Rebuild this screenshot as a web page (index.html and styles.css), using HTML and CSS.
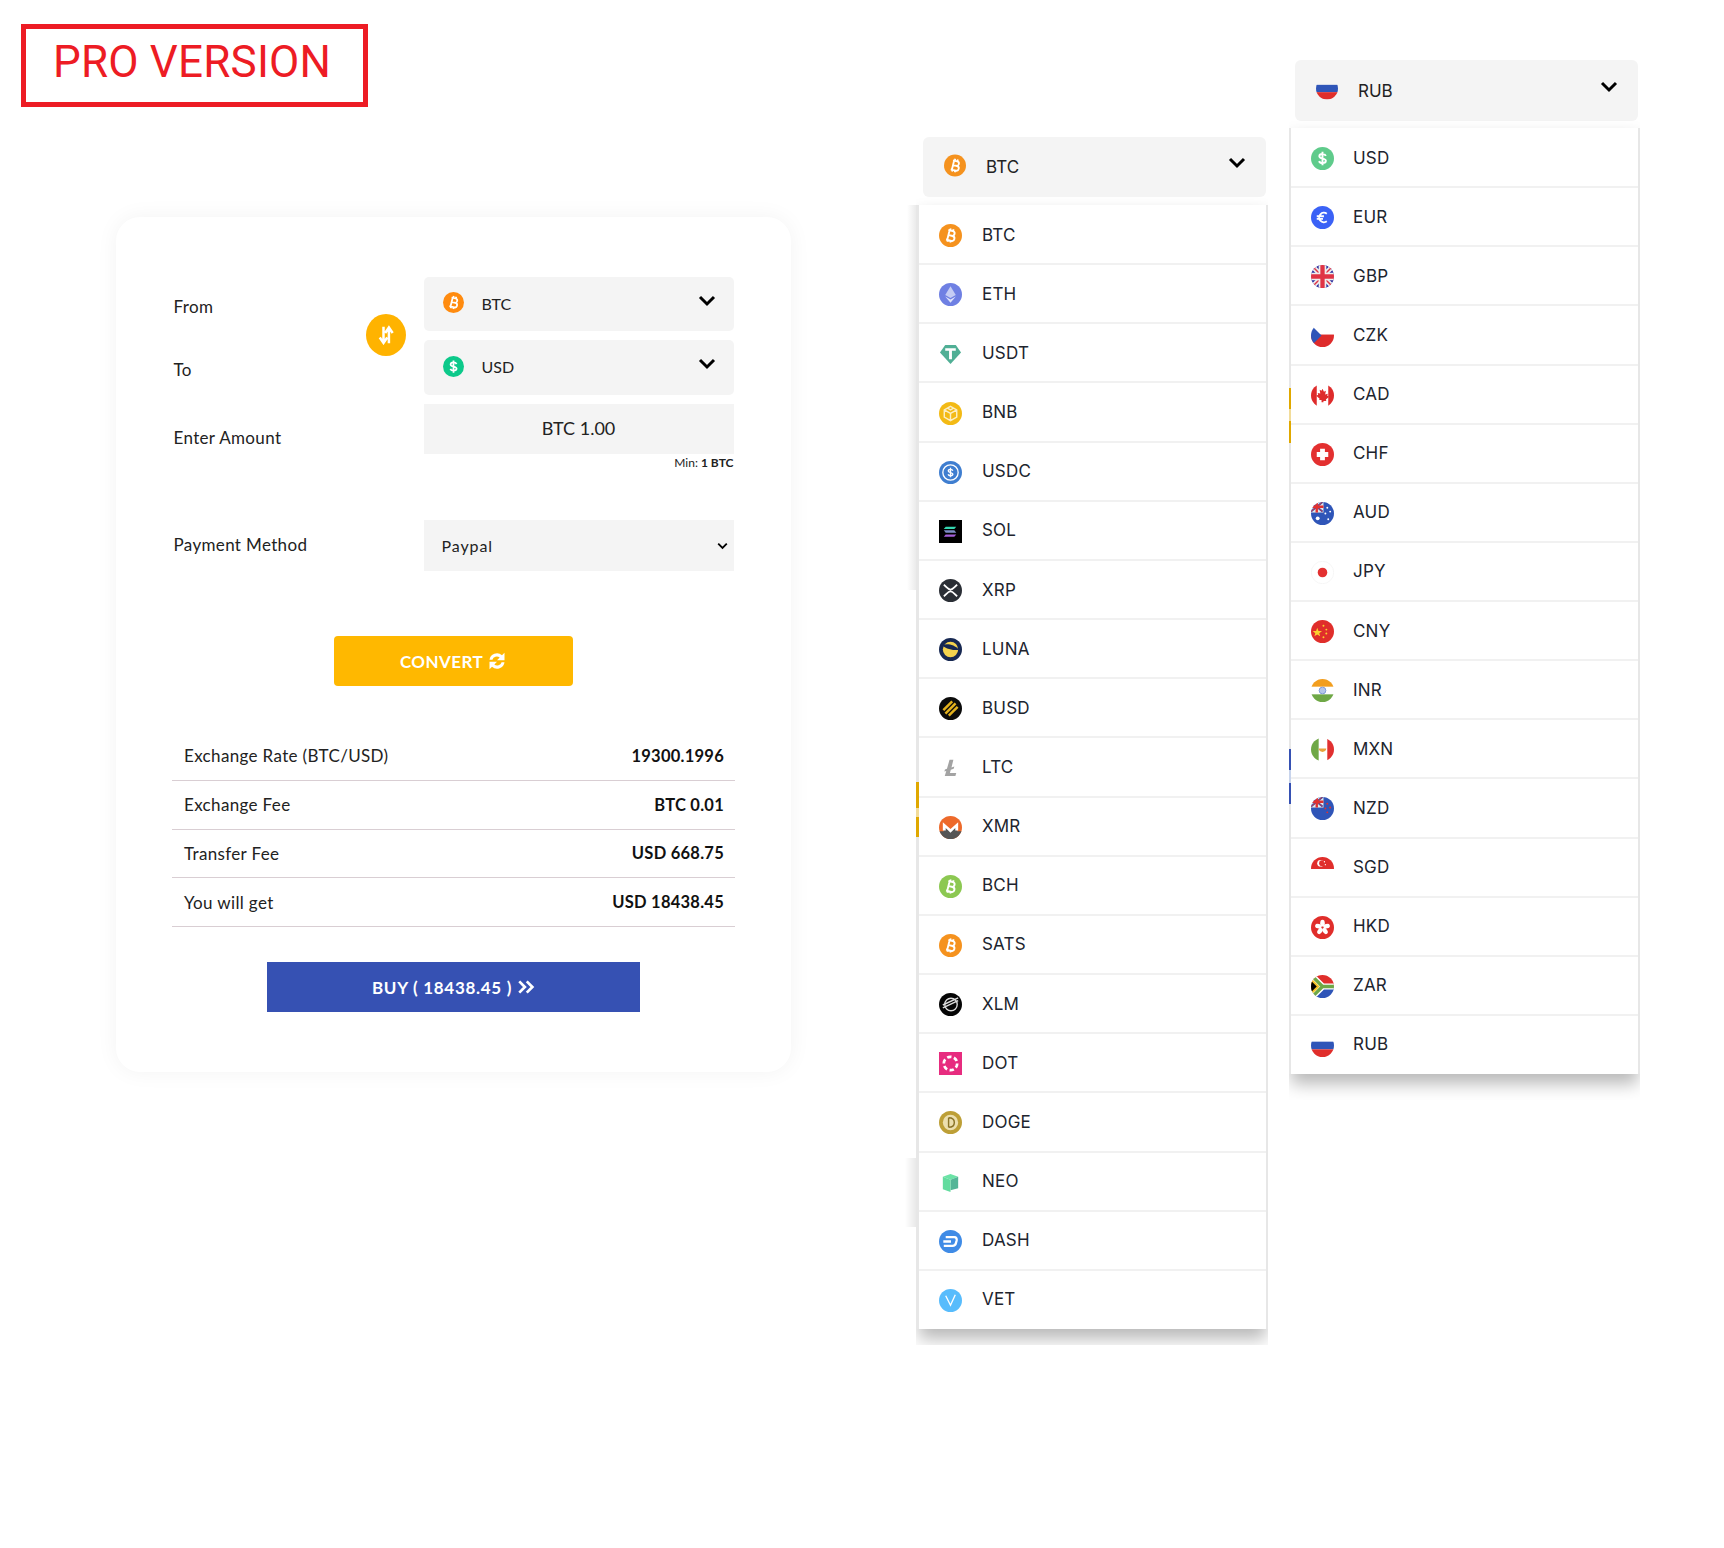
FILE: index.html
```html
<!DOCTYPE html>
<html lang="en">
<head>
<meta charset="utf-8">
<title>Pro Version</title>
<link rel="stylesheet" href="styles.css">
</head>
<body>
<svg class="defs" aria-hidden="true">
<defs>
<clipPath id="c"><circle cx="12" cy="12" r="12"/></clipPath>
<g id="bm" fill="none" stroke="#fff" stroke-width="2" transform="rotate(14 12 12)"><path d="M8.5 7h4.7a2.5 2.5 0 0 1 0 5H9.5m0 0h4.7a2.6 2.6 0 0 1 0 5.2H8.5M9.8 7v10M10.5 4.8V7M13.5 4.8V7M10.5 17v2.2M13.5 17v2.2"/></g>
<path id="dm" fill="none" stroke="#fff" stroke-width="2" d="M15.5 9.3c-.5-1.300-1.800-2-3.500-2-1.900 0-3.300 1-3.300 2.400 0 3.100 6.800 1.700 6.800 4.700 0 1.400-1.400 2.400-3.500 2.400-1.800 0-3.100-.8-3.600-2.100M12 5v14"/>
<g id="uk"><rect width="13" height="11" fill="#e8e8e8"/><path d="M0 0l12 10M12 0L0 10" stroke="#2f55b8" stroke-width="2"/><path d="M0 0l12 10M12 0L0 10" stroke="#e03030" stroke-width="1"/><path d="M6 0v11M0 5h13" stroke="#e03030" stroke-width="2.5"/></g>
<symbol id="btc" viewBox="0 0 24 24"><circle cx="12" cy="12" r="12" fill="#f5921e"/><use href="#bm"/></symbol>
<symbol id="btc2" viewBox="0 0 24 24"><circle cx="12" cy="12" r="12" fill="#ff8b0f"/><use href="#bm"/></symbol>
<symbol id="eth" viewBox="0 0 24 24"><circle cx="12" cy="12" r="12" fill="#6f80e3"/><path d="M12 3.5l-5.500 9L12 15.700l5.500-3.200z" fill="#c5cdf4"/><path d="M6.500 14L12 20.500l5.500-6.500-5.500 3.200z" fill="#dfe3fa"/></symbol>
<symbol id="usdt" viewBox="0 0 24 24"><path d="M6.500 3h11L23 11 12 23 1 11z" fill="#50af95"/><path d="M6.500 6.500h11v2.500h-4v9h-3V9h-4z" fill="#fff"/></symbol>
<symbol id="bnb" viewBox="0 0 24 24"><circle cx="12" cy="12" r="12" fill="#f3ba15"/><path d="M12 4.500l6.500 3.700v7.600L12 19.500l-6.500-3.700V8.200zM5.500 8.200l6.500 3.700 6.500-3.700M12 11.900v7.600M8.800 6.400l3.200 1.800 3.200-1.800" fill="none" stroke="#fff" stroke-width="1.500" opacity=".75"/></symbol>
<symbol id="usdc" viewBox="0 0 24 24"><circle cx="12" cy="12" r="12" fill="#3f7ed0"/><circle cx="12" cy="12" r="8" fill="none" stroke="#fff" stroke-width="1.400"/><use href="#dm" transform="translate(3.600 3.600) scale(.7)"/></symbol>
<symbol id="sol" viewBox="0 0 24 24"><rect width="24" height="24" fill="#000"/><path d="M7 7h11l-2 2.500H5z" fill="#35d6b0"/><path d="M5 10.800h11l2 2.400H7z" fill="#7d8ec6"/><path d="M7 15h11l-2 2.500H5z" fill="#a45fd8"/></symbol>
<symbol id="xrp" viewBox="0 0 24 24"><circle cx="12" cy="12" r="12" fill="#2b2f36"/><path d="M5 6c3 2 4 5 7 5s4-3 7-5M5 18c3-2 4-5 7-5s4 3 7 5" fill="none" stroke="#fff" stroke-width="1.800"/></symbol>
<symbol id="luna" viewBox="0 0 24 24"><circle cx="12" cy="12" r="12" fill="#172852"/><circle cx="12" cy="12" r="8" fill="#f4d34e"/><path d="M3 7.500c5-2 13-1 18 5-5 .5-13-.5-18-5z" fill="#172852"/></symbol>
<symbol id="busd" viewBox="0 0 24 24"><circle cx="12" cy="12" r="12" fill="#0b0b0b"/><g transform="rotate(-45 12 12)" fill="#e3b11d"><rect x="5.500" y="6.700" width="13" height="2.600"/><rect x="4.500" y="10.700" width="15" height="2.600"/><rect x="5.500" y="14.700" width="13" height="2.600"/></g></symbol>
<symbol id="ltc" viewBox="0 0 24 24"><path d="M11 4h4l-2 8 3-1-.7 2.400-3 1-.9 3.300h6.600l-.9 3.300H6l1.600-5.400-2 .7.600-2.200 2.100-.8z" fill="#a3a3a3"/></symbol>
<symbol id="xmr" viewBox="0 0 24 24"><circle cx="12" cy="12" r="12" fill="#ed6a2b"/><path clip-path="url(#c)" d="M0 16h5V10l7 6 7-6v6h5v8H0z" fill="#555"/><path d="M4 15V6.500l8 7 8-7V15h-3v-2.500l-5 5-5-5V15z" fill="#fff"/></symbol>
<symbol id="bch" viewBox="0 0 24 24"><circle cx="12" cy="12" r="12" fill="#8cc852"/><use href="#bm"/></symbol>
<symbol id="xlm" viewBox="0 0 24 24"><circle cx="12" cy="12" r="12" fill="#050505"/><circle cx="12.500" cy="12" r="6.500" fill="none" stroke="#ddd" stroke-width="1.400"/><path d="M4 15.500L20 8M4 12.500L20 5" stroke="#ddd" stroke-width="1.500"/></symbol>
<symbol id="dot" viewBox="0 0 24 24"><rect width="24" height="24" fill="#e72c7f"/><circle cx="12" cy="12" r="7" fill="none" stroke="#fff" stroke-width="2.800" stroke-dasharray="4.600 2.700"/></symbol>
<symbol id="doge" viewBox="0 0 24 24"><circle cx="12" cy="12" r="12" fill="#bd9f36"/><circle cx="12" cy="12" r="8" fill="#ecdfae"/><path d="M10 7v10M10 7c5 0 6 2 6 5s-1 5-6 5" fill="none" stroke="#8a7326" stroke-width="1.500"/></symbol>
<symbol id="neo" viewBox="0 0 24 24"><path d="M4 6l8-3 8 3-8 3z" fill="#6be3a6"/><path d="M12 9l8-3v12l-8 2z" fill="#54b597"/><path d="M4 6l8 3v13l-8-3z" fill="#63dc9f"/></symbol>
<symbol id="dash" viewBox="0 0 24 24"><circle cx="12" cy="12" r="12" fill="#3f8be6"/><path d="M7 7.500h9c2 0 2.800 1.500 2.400 3.500l-.7 2.500c-.4 2-1.700 3-3.700 3H5M4.500 12h8" fill="none" stroke="#fff" stroke-width="2.400"/></symbol>
<symbol id="vet" viewBox="0 0 24 24"><circle cx="12" cy="12" r="12" fill="#58bcfc"/><path d="M7 7l5 10 5-11" fill="none" stroke="#fff" stroke-width="1.400"/></symbol>
<symbol id="usd" viewBox="0 0 24 24"><circle cx="12" cy="12" r="12" fill="#5fcb8b"/><use href="#dm"/></symbol>
<symbol id="usd2" viewBox="0 0 24 24"><circle cx="12" cy="12" r="12" fill="#0cc98a"/><use href="#dm"/></symbol>
<symbol id="eur" viewBox="0 0 24 24"><circle cx="12" cy="12" r="12" fill="#3b62f6"/><path d="M16.500 8a5 5 0 1 0 0 8M6 10.700h7.500M6 13.500h6.500" fill="none" stroke="#fff" stroke-width="1.900"/></symbol>
<symbol id="gbp" viewBox="0 0 24 24"><g clip-path="url(#c)"><rect width="24" height="24" fill="#2a2e9e"/><path d="M0 0l24 24M24 0L0 24" stroke="#eee" stroke-width="5"/><path d="M0 0l24 24M24 0L0 24" stroke="#e03445" stroke-width="1.500"/><path d="M12 0v24M0 12h24" stroke="#eee" stroke-width="8"/><path d="M12 0v24M0 12h24" stroke="#e03445" stroke-width="4.500"/></g></symbol>
<symbol id="czk" viewBox="0 0 24 24"><g clip-path="url(#c)"><rect y="11" width="24" height="13" fill="#de2b2b"/><path d="M0 0l11 11L0 22z" fill="#2f55b8" transform="translate(0 1)"/></g></symbol>
<symbol id="cad" viewBox="0 0 24 24"><g clip-path="url(#c)"><path d="M0 0h6v24H0zM18 0h6v24h-6z" fill="#de2b2b"/><path d="M12 5l1.500 3 2-1-.7 4 2.700-.7-.5 2 2 1-3.500 3 .5 1.500H13V19h-2v-2.200H8.500l.5-1.500-3.500-3 2-1-.5-2 2.700.7-.7-4 2 1z" fill="#de2b2b"/></g></symbol>
<symbol id="chf" viewBox="0 0 24 24"><circle cx="12" cy="12" r="12" fill="#e33030"/><path d="M9.500 6h5v3.500H18v5h-3.500V18h-5v-3.500H6v-5h3.500z" fill="#fff"/></symbol>
<symbol id="aud" viewBox="0 0 24 24"><g clip-path="url(#c)"><rect width="24" height="24" fill="#2f55b8"/><use href="#uk"/><circle cx="7" cy="17" r="2" fill="#fff"/><circle cx="17" cy="6" r="1" fill="#fff"/><circle cx="20" cy="10" r="1" fill="#fff"/><circle cx="15" cy="12" r="1" fill="#fff"/><circle cx="18" cy="18" r="1" fill="#fff"/></g></symbol>
<symbol id="jpy" viewBox="0 0 24 24"><circle cx="12" cy="12" r="11.700" fill="#fff" stroke="#f0f0f0" stroke-width=".6"/><circle cx="12" cy="12" r="5" fill="#e33030"/></symbol>
<symbol id="cny" viewBox="0 0 24 24"><circle cx="12" cy="12" r="12" fill="#e02e2b"/><path d="M6.500 8l1.300 3.500H11.500L8.600 13.700l1 3.300-3.100-2-3 2 1-3.300L1.700 11.500h3.600z" fill="#fbd12f"/><circle cx="13" cy="6" r="1" fill="#fbd12f"/><circle cx="16" cy="10" r="1" fill="#fbd12f"/><circle cx="16" cy="14" r="1" fill="#fbd12f"/><circle cx="13" cy="18" r="1" fill="#fbd12f"/></symbol>
<symbol id="inr" viewBox="0 0 24 24"><g clip-path="url(#c)"><rect y="0" width="24" height="8" fill="#f29e1f"/><rect y="16" width="24" height="8" fill="#6fa846"/></g><circle cx="12" cy="12" r="3.500" fill="#b5c6ea" stroke="#7f9ad8"/></symbol>
<symbol id="mxn" viewBox="0 0 24 24"><g clip-path="url(#c)"><rect width="8" height="24" fill="#6fa846"/><rect x="17" width="7" height="24" fill="#e13030"/><path d="M8 11h8c0 2-2 3.500-4 3.500S8 13 8 11z" fill="#e9a23b"/></g></symbol>
<symbol id="nzd" viewBox="0 0 24 24"><g clip-path="url(#c)"><rect width="24" height="24" fill="#2f55b8"/><use href="#uk"/><circle cx="17" cy="7" r="1" fill="#e03030"/><circle cx="20" cy="11" r="1" fill="#e03030"/><circle cx="15" cy="12" r="1" fill="#e03030"/><circle cx="17" cy="16" r="1" fill="#e03030"/></g></symbol>
<symbol id="sgd" viewBox="0 0 24 24"><g clip-path="url(#c)"><rect width="24" height="12.500" fill="#e02e2b"/><circle cx="10" cy="6.500" r="3.500" fill="#fff"/><circle cx="11.500" cy="6.500" r="3" fill="#e02e2b"/><circle cx="14" cy="5" r=".7" fill="#fff"/><circle cx="15" cy="8" r=".7" fill="#fff"/></g></symbol>
<symbol id="hkd" viewBox="0 0 24 24"><circle cx="12" cy="12" r="12" fill="#e02e2b"/><g fill="#fff"><ellipse cx="12" cy="7.500" rx="2.400" ry="3.500"/><ellipse cx="12" cy="7.500" rx="2.400" ry="3.500" transform="rotate(72 12 12)"/><ellipse cx="12" cy="7.500" rx="2.400" ry="3.500" transform="rotate(144 12 12)"/><ellipse cx="12" cy="7.500" rx="2.400" ry="3.500" transform="rotate(216 12 12)"/><ellipse cx="12" cy="7.500" rx="2.400" ry="3.500" transform="rotate(288 12 12)"/></g></symbol>
<symbol id="zar" viewBox="0 0 24 24"><g clip-path="url(#c)"><rect width="24" height="12" fill="#e02e2b"/><rect y="12" width="24" height="12" fill="#2f55b8"/><path d="M0 0l12 12h12M0 24l12-12" fill="none" stroke="#fff" stroke-width="6.500"/><path d="M0 0l12 12h12M0 24l12-12" fill="none" stroke="#6fa846" stroke-width="3.500"/><path d="M0 3l9 9-9 9z" fill="#f6c528"/><path d="M0 6l6 6-6 6z" fill="#000"/></g></symbol>
<symbol id="rub" viewBox="0 0 24 24"><g clip-path="url(#c)"><rect y="8" width="24" height="8" fill="#2f55b8"/><rect y="16" width="24" height="8" fill="#e02e2b"/></g></symbol>
<symbol id="chev" viewBox="0 0 18 12"><path d="M2 2l7 7 7-7" fill="none" stroke="#000" stroke-width="3"/></symbol>
</defs>
</svg>

<main class="page">
  <section class="col-left">
    <div class="badge">PRO VERSION</div>
    <div class="card">
      <div class="form">
        <span class="swap"><svg viewBox="0 0 24 24"><path d="M9 2v19M4.500 15l4.500 6.500 4.500-6.500M15.500 22V3M11 9.500L15.500 3 20 9.500" fill="none" stroke="#fff" stroke-width="3"/></svg></span>
        <label class="lbl lbl-sel">From</label>
        <div class="field sel"><svg class="sel-ico"><use href="#btc2"/></svg><span class="sel-txt">BTC</span><svg class="chev"><use href="#chev"/></svg></div>
        <label class="lbl lbl-sel">To</label>
        <div class="field sel sel-b"><svg class="sel-ico"><use href="#usd2"/></svg><span class="sel-txt">USD</span><svg class="chev"><use href="#chev"/></svg></div>
        <label class="lbl lbl-amt">Enter Amount</label>
        <div>
          <div class="field amount">BTC 1.00</div>
          <div class="min">Min: <b>1 BTC</b></div>
        </div>
        <label class="lbl lbl-pay">Payment Method</label>
        <div class="field pay"><span>Paypal</span><svg class="chev-s"><use href="#chev"/></svg></div>
      </div>
      <button class="btn convert">CONVERT<svg viewBox="0 0 24 24"><path d="M3 10.500a9 9 0 0 1 15-5.500l3-3v9h-9l3.200-3.200A5.500 5.500 0 0 0 6.500 10.500zM21 13.500a9 9 0 0 1-15 5.500l-3 3v-9h9l-3.200 3.200a5.500 5.500 0 0 0 8.700-2.700z" fill="#fff"/></svg></button>
      <div class="rows">
        <div class="row"><span>Exchange Rate (BTC/USD)</span><b>19300.1996</b></div>
        <div class="row"><span>Exchange Fee</span><b>BTC 0.01</b></div>
        <div class="row"><span>Transfer Fee</span><b>USD 668.75</b></div>
        <div class="row"><span>You will get</span><b>USD 18438.45</b></div>
      </div>
      <button class="btn buy">BUY ( 18438.45 )<svg viewBox="0 0 24 24"><path d="M3 4.500l7.500 7.500L3 19.500M13 4.500l7.500 7.500-7.500 7.500" fill="none" stroke="#fff" stroke-width="3.600"/></svg></button>
    </div>
  </section>

  <section class="col-mid">
    <div class="head"><svg class="head-ico"><use href="#btc"/></svg><span class="head-txt">BTC</span><svg class="chev"><use href="#chev"/></svg></div>
    <div class="panel panel-mid">
      <i class="glow glow-a"></i><i class="glow glow-b"></i>
      <i class="strip strip-y1"></i><i class="strip-gap strip-y1g"></i>
      <ul class="list list-mid">
        <li><svg><use href="#btc"/></svg>BTC</li>
        <li><svg><use href="#eth"/></svg>ETH</li>
        <li><svg><use href="#usdt"/></svg>USDT</li>
        <li><svg><use href="#bnb"/></svg>BNB</li>
        <li><svg><use href="#usdc"/></svg>USDC</li>
        <li><svg><use href="#sol"/></svg>SOL</li>
        <li><svg><use href="#xrp"/></svg>XRP</li>
        <li><svg><use href="#luna"/></svg>LUNA</li>
        <li><svg><use href="#busd"/></svg>BUSD</li>
        <li><svg><use href="#ltc"/></svg>LTC</li>
        <li><svg><use href="#xmr"/></svg>XMR</li>
        <li><svg><use href="#bch"/></svg>BCH</li>
        <li><svg><use href="#btc"/></svg>SATS</li>
        <li><svg><use href="#xlm"/></svg>XLM</li>
        <li><svg><use href="#dot"/></svg>DOT</li>
        <li><svg><use href="#doge"/></svg>DOGE</li>
        <li><svg><use href="#neo"/></svg>NEO</li>
        <li><svg><use href="#dash"/></svg>DASH</li>
        <li><svg><use href="#vet"/></svg>VET</li>
      </ul>
    </div>
  </section>

  <section class="col-right">
    <div class="head"><svg class="head-ico"><use href="#rub"/></svg><span class="head-txt">RUB</span><svg class="chev"><use href="#chev"/></svg></div>
    <div class="panel panel-right">
      <i class="strip strip-y2"></i><i class="strip-gap strip-y2g"></i>
      <i class="strip strip-b"></i><i class="strip-gap strip-bg"></i>
      <ul class="list list-right">
        <li><svg><use href="#usd"/></svg>USD</li>
        <li><svg><use href="#eur"/></svg>EUR</li>
        <li><svg><use href="#gbp"/></svg>GBP</li>
        <li><svg><use href="#czk"/></svg>CZK</li>
        <li><svg><use href="#cad"/></svg>CAD</li>
        <li><svg><use href="#chf"/></svg>CHF</li>
        <li><svg><use href="#aud"/></svg>AUD</li>
        <li><svg><use href="#jpy"/></svg>JPY</li>
        <li><svg><use href="#cny"/></svg>CNY</li>
        <li><svg><use href="#inr"/></svg>INR</li>
        <li><svg><use href="#mxn"/></svg>MXN</li>
        <li><svg><use href="#nzd"/></svg>NZD</li>
        <li><svg><use href="#sgd"/></svg>SGD</li>
        <li><svg><use href="#hkd"/></svg>HKD</li>
        <li><svg><use href="#zar"/></svg>ZAR</li>
        <li><svg><use href="#rub"/></svg>RUB</li>
      </ul>
    </div>
  </section>
</main>
</body>
</html>
```

FILE: styles.css
```css
* { box-sizing: border-box; }
html, body { margin: 0; background: #fff; }
body { font-family: "Lato", "Liberation Sans", sans-serif; color: #222; }
.defs { position: absolute; width: 0; height: 0; }

.page { display: flex; align-items: flex-start; width: 1724px; height: 1548px; overflow: hidden; }
.col-left { width: 916px; padding: 24px 0 0 21px; flex: none; }
.col-mid { width: 352px; padding-top: 137px; flex: none; }
.col-right { width: 351px; margin-left: 21px; padding-top: 60px; flex: none; }

.badge {
  width: 347px; height: 83px; border: 5px solid #ed1c24; color: #ed1c24;
  font: 400 44px/67px "Roboto", sans-serif; padding-left: 27px; letter-spacing: .2px;
}

.card {
  width: 675px; height: 855px; margin: 110px 0 0 95px; padding-top: 60px;
  background: #fff; border-radius: 24px; box-shadow: 0 0 22px rgba(0, 0, 0, .05);
  display: flex; flex-direction: column; align-items: center;
}

.form {
  position: relative; width: 560px; display: grid;
  grid-template-columns: 250px 310px; align-items: start;
}
.swap {
  position: absolute; left: 192px; top: 37px; width: 40px; height: 42px; border-radius: 50%;
  background: #ffb300; display: flex; align-items: center; justify-content: center;
}
.swap svg { width: 20px; height: 20px; }
.lbl { font-size: 17px; line-height: 20px; color: #222; letter-spacing: .35px; }
.lbl-sel { padding-top: 20px; }
.lbl-amt { padding-top: 24px; }
.lbl-pay { padding-top: 15px; }
.field { background: #f4f4f4; width: 310px; }
.sel {
  height: 54px; border-radius: 5px; margin-bottom: 9px; padding: 0 18px 0 19px;
  display: flex; align-items: center;
}
.sel-b { height: 55px; }
.sel-ico { width: 21px; height: 21px; margin-bottom: 4px; flex: none; }
.sel-b .sel-ico { margin-bottom: 2px; }
.sel-txt { margin-left: 18px; margin-bottom: 2px; font-size: 16px; }
.chev { width: 18px; height: 12px; margin-left: auto; margin-bottom: 6px; flex: none; }
.sel-b .chev { margin-bottom: 8px; }
.amount { height: 50px; text-align: center; font-size: 18px; line-height: 49px; }
.min { height: 66px; text-align: right; font-size: 12px; line-height: 18px; }
.pay {
  height: 51px; padding: 0 6px 0 18px; display: flex; align-items: center;
  justify-content: space-between; font-size: 16px; letter-spacing: .9px;
}
.chev-s { width: 11px; height: 8px; }

.btn {
  border: 0; color: #fff; font-family: "Lato", sans-serif; font-weight: 700; font-size: 17px;
  display: flex; align-items: center; justify-content: center; padding: 0; flex: none;
}
.convert { width: 239px; height: 50px; margin-top: 65px; background: #ffb800; border-radius: 4px; gap: 4px; letter-spacing: .4px; }
.convert svg { width: 20px; height: 20px; }
.buy { width: 373px; height: 50px; margin-top: 35px; background: #3651b3; gap: 5px; letter-spacing: .7px; }
.buy svg { width: 18px; height: 18px; }

.rows { width: 563px; margin-top: 46px; }
.row {
  height: 48.750px; padding: 0 11px 0 12px; display: flex; align-items: center; justify-content: space-between;
  border-bottom: 1px solid #d9ced3; font-size: 17px; letter-spacing: .35px;
}
.row b { font-weight: 700; color: #111; font-size: 16.500px; letter-spacing: .25px; }

.head {
  width: 343px; height: 60px; margin-left: 7px; margin-bottom: 8px; padding: 0 20px 0 21px;
  background: #f4f4f4; border-radius: 6px; display: flex; align-items: center;
}
.col-right .head { height: 61px; margin-left: 6px; margin-bottom: 7px; }
.head-ico { width: 22px; height: 23px; margin-bottom: 4px; flex: none; }
.head-txt { margin-left: 20px; font: 400 17px "Inter", sans-serif; color: #222; }
.head .chev { margin-bottom: 8px; }

.panel { position: relative; }
.panel-mid { height: 1140px; padding: 0 2px 0 3px; }
.panel-right { height: 972px; padding: 0 2px 0 2px; }
.list {
  list-style: none; margin: 0; padding: 0; background: #fff; display: grid; grid-auto-rows: 1fr;
  position: relative;
  box-shadow: -3px 0 0 #e7e7e7, 2px 0 0 #e7e7e7, 0 10px 16px rgba(0, 0, 0, .28);
}
.list-mid { height: 1124px; width: 347px; clip-path: inset(-16px -2px -16px -3px); }
.list-right { height: 946px; width: 347px; clip-path: inset(-16px -2px -26px -2px); }
.list li {
  position: relative; display: flex; align-items: center; padding-left: 20px;
  font: 400 17px "Inter", sans-serif; color: #20242e; letter-spacing: .2px;
}
.list li::after {
  content: ""; position: absolute; left: 0; right: 0; bottom: -1px; height: 2px; background: #f1f1f1;
}
.list li:last-child::after { display: none; }
.list svg { width: 23px; height: 23px; margin-top: 2px; flex: none; }
.list-mid svg { margin-right: 20px; }
.list-right svg { margin-right: 19px; }

.glow { position: absolute; z-index: 0; }
.glow-a { left: -9px; top: 0; width: 12px; height: 385px; background: linear-gradient(to right, #fff, #e4e4e4); }
.glow-b { left: -11px; top: 953px; width: 11px; height: 69px; background: linear-gradient(to right, #fff, #e9e9e9); }
.strip, .strip-gap { position: absolute; z-index: 2; width: 3px; left: 0; }
.strip-y1, .strip-y2 { background: #e0a800; }
.strip-y1 { top: 577px; height: 55px; }
.strip-y1g { top: 603px; height: 9px; background: #f2dc9a; }
.panel-right .strip, .panel-right .strip-gap { width: 2px; }
.strip-y2 { top: 260px; height: 55px; }
.strip-y2g { top: 281px; height: 12px; background: #f2dc9a; }
.strip-b { top: 621px; height: 55px; background: #3651b3; }
.strip-bg { top: 642px; height: 13px; background: #c8d4ec; }
```
